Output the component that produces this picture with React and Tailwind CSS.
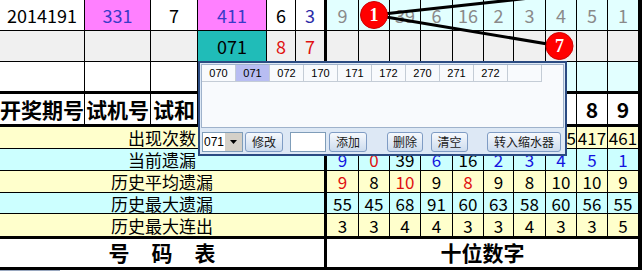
import clsx from 'clsx';

const LEFT_W = ['w-[85px]', 'w-[66px]', 'w-[47px]', 'w-[69px]', 'w-[29px]', 'w-[28px]'];
const RIGHT_W = ['w-[32px]', 'w-[31px]', 'w-[31px]', 'w-[32px]', 'w-[31px]', 'w-[30px]', 'w-[32px]', 'w-[31px]', 'w-[31px]', 'w-[30px]'];

function Cell({ w, last, className, children }) {
  return (
    <div className={clsx('flex shrink-0 items-center justify-center', w, !last && 'border-r border-black', className)}>
      {children}
    </div>
  );
}

function VThick() {
  return <div className="w-[3px] shrink-0 self-stretch bg-black" />;
}

function RThick() {
  return <div className="w-[4px] shrink-0 self-stretch bg-black" />;
}

function HThick() {
  return <div className="h-[3px] w-full bg-black" />;
}

function RightCells({ bg, values, colors, className }) {
  return RIGHT_W.map((w, i) => (
    <Cell key={i} w={w} last={i === 9} className={clsx(bg, className, colors && colors[i])}>
      {values ? values[i] : ''}
    </Cell>
  ));
}

const B = 'text-[#1414e0]';
const R = 'text-[#e01010]';
const K = 'text-black';

// cells hidden under the dialog are left empty
const dataRows = [
  {
    label: '出现次数',
    bg: 'bg-[#ffffcc]',
    h: 'h-[22px] border-b border-black',
    values: ['', '', '', '', '', '', '', '425', 417, 461],
    colors: [K, K, K, K, K, K, K, 'justify-end! overflow-hidden', K, K],
  },
  {
    label: '当前遗漏',
    bg: 'bg-[#ccffff]',
    h: 'h-[22px] border-b border-black',
    values: [9, 0, 39, 6, 16, 2, 3, 4, 5, 1],
    colors: [B, R, K, B, K, B, B, B, B, B],
  },
  {
    label: '历史平均遗漏',
    bg: 'bg-[#ffffcc]',
    h: 'h-[22px] border-b border-black',
    values: [9, 8, 10, 9, 8, 9, 8, 10, 10, 9],
    colors: [R, K, R, K, R, K, K, K, K, K],
  },
  {
    label: '历史最大遗漏',
    bg: 'bg-[#ccffff]',
    h: 'h-[21px] border-b border-black',
    values: [55, 45, 68, 91, 60, 63, 58, 60, 56, 55],
  },
  {
    label: '历史最大连出',
    bg: 'bg-[#ffffcc]',
    h: 'h-[22px]',
    values: [3, 3, 4, 4, 3, 3, 4, 3, 3, 5],
  },
];

const codes = ['070', '071', '072', '170', '171', '172', '270', '271', '272', ''];

function Btn({ className, children }) {
  return (
    <button
      className={clsx(
        'h-[20px] shrink-0 rounded-[3px] border border-[#7f9cc4] bg-gradient-to-b from-[#f6f9fd] to-[#cddcee] text-[12px] leading-none text-[#1a1a1a]',
        className
      )}
    >
      {children}
    </button>
  );
}

function Dialog() {
  return (
    <div className="absolute left-[198px] top-[61px] flex h-[95px] w-[369px] flex-col border-2 border-[#2b4b82] bg-[#dde8f5]">
      <div className="ml-[1px] mt-[1px] h-[64px] w-[363px] border border-[#9fb2cb] bg-[#f8fafd]">
        <div className="flex h-[17px]">
          {codes.map((c, i) => (
            <div
              key={i}
              className={clsx(
                "flex w-[34px] items-center justify-center border-b border-r border-[#c4ccd6] font-['Liberation_Sans',sans-serif] text-[11px]",
                i === 1 && 'bg-[#b8bdf2]'
              )}
            >
              {c}
            </div>
          ))}
        </div>
      </div>
      <div className="mt-[4px] flex h-[20px] items-center">
        <div className="ml-[2px] flex h-[20px] w-[41px] border border-[#7f9db9]">
          <div className="flex w-[23px] items-center bg-white pl-[1px] font-['Liberation_Sans',sans-serif] text-[12px]">071</div>
          <div className="flex w-[17px] items-center justify-center bg-[#d4d0c8]">
            <svg width="8" height="5" viewBox="0 0 8 5">
              <path d="M0 0h7L3.5 4z" fill="#000" />
            </svg>
          </div>
        </div>
        <Btn className="ml-[2px] w-[38px]">修改</Btn>
        <div className="ml-[7px] h-[20px] w-[36px] border border-[#7f9db9] bg-white" />
        <Btn className="ml-[3px] w-[38px]">添加</Btn>
        <Btn className="ml-[20px] w-[36px]">删除</Btn>
        <Btn className="ml-[8px] w-[37px]">清空</Btn>
        <Btn className="ml-[19px] w-[74px]">转入缩水器</Btn>
      </div>
    </div>
  );
}

function Overlay() {
  return (
    <svg className="pointer-events-none absolute left-0 top-0" width="642" height="62">
      <line x1="374" y1="15" x2="530" y2="-2" stroke="#000" strokeWidth="3" />
      <line x1="374" y1="15" x2="559.5" y2="46" stroke="#000" strokeWidth="3" />
      <circle cx="374" cy="15" r="13.5" fill="#f00" stroke="#c00" strokeWidth="1" />
      <circle cx="559.5" cy="46" r="13.5" fill="#f00" stroke="#c00" strokeWidth="1" />
      <text x="374" y="21" textAnchor="middle" fill="#fff" fontSize="18" fontWeight="bold" fontFamily="Liberation Serif, serif">1</text>
      <text x="559.5" y="52" textAnchor="middle" fill="#fff" fontSize="18" fontWeight="bold" fontFamily="Liberation Serif, serif">7</text>
    </svg>
  );
}

export default function App() {
  return (
    <div className="relative h-[271px] w-[642px] overflow-hidden bg-white font-['Noto_Sans_CJK_SC',sans-serif] text-black">
      {/* row 1 */}
      <div className="flex h-[31px] border-b border-black text-[18px]">
        <Cell w={LEFT_W[0]}>2014191</Cell>
        <Cell w={LEFT_W[1]} className="bg-[#ff80ff] text-[#3a3ac8]">331</Cell>
        <Cell w={LEFT_W[2]}>7</Cell>
        <Cell w={LEFT_W[3]} className="bg-[#ff80ff] text-[#3a3ac8]">411</Cell>
        <Cell w={LEFT_W[4]}>6</Cell>
        <Cell w={LEFT_W[5]} last className="text-[#2a2aa8]">3</Cell>
        <VThick />
        <RightCells
          bg="bg-[#e2ffff]"
          className="text-[#8a8a8a]"
          values={[9, '', 39, 6, 16, 2, 3, 4, 5, 1]}
        />
        <RThick />
      </div>
      {/* row 2 */}
      <div className="flex h-[31px] border-b border-black text-[18px]">
        <Cell w={LEFT_W[0]} className="bg-[#f0f0f0]" />
        <Cell w={LEFT_W[1]} className="bg-[#f0f0f0]" />
        <Cell w={LEFT_W[2]} className="bg-[#f0f0f0]" />
        <Cell w={LEFT_W[3]} className="bg-[#20bcb8]">071</Cell>
        <Cell w={LEFT_W[4]} className="bg-[#f0f0f0] text-[#e01010]">8</Cell>
        <Cell w={LEFT_W[5]} last className="bg-[#f0f0f0] text-[#e01010]">7</Cell>
        <VThick />
        <RightCells bg="bg-[#f0f0f0]" />
        <RThick />
      </div>
      {/* row 3 */}
      <div className="flex h-[29px]">
        {LEFT_W.map((w, i) => (
          <Cell key={i} w={w} last={i === 5} />
        ))}
        <VThick />
        <RightCells bg="bg-[#e2ffff]" />
        <RThick />
      </div>
      <HThick />
      {/* header */}
      <div className="flex h-[30px] text-[21px] font-bold leading-none">
        <Cell w={LEFT_W[0]} className="overflow-hidden whitespace-nowrap">开奖期号</Cell>
        <Cell w={LEFT_W[1]} className="overflow-hidden whitespace-nowrap">试机号</Cell>
        <Cell w={LEFT_W[2]} className="overflow-hidden whitespace-nowrap">试和</Cell>
        <Cell w={LEFT_W[3]} />
        <Cell w={LEFT_W[4]} />
        <Cell w={LEFT_W[5]} last />
        <VThick />
        <RightCells values={['', '', '', '', '', '', '', '', 8, 9]} />
        <RThick />
      </div>
      <HThick />
      {dataRows.map((r) => (
        <div key={r.label} className={clsx('flex text-[17px] leading-none', r.h)}>
          <div className={clsx('flex w-[324px] shrink-0 items-center justify-center', r.bg)}>{r.label}</div>
          <VThick />
          <RightCells bg={r.bg} values={r.values} colors={r.colors} />
          <RThick />
        </div>
      ))}
      <HThick />
      <div className="flex h-[28px] text-[21px] font-bold">
        <div className="flex w-[324px] shrink-0 items-center justify-center tracking-[22px] pl-[22px]">号码表</div>
        <VThick />
        <div className="flex w-[311px] shrink-0 items-center justify-center">十位数字</div>
        <RThick />
      </div>
      <HThick />
      <div className="h-[1px] w-[60px] bg-[#9aa8c0]" />
      <Overlay />
      <Dialog />
    </div>
  );
}
